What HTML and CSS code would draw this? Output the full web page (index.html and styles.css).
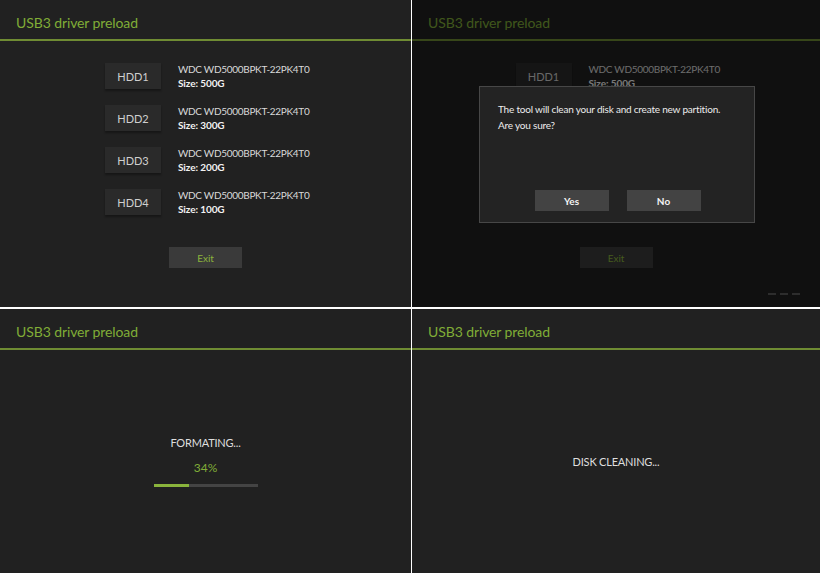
FILE: index.html
```html
<!DOCTYPE html>
<html>
<head>
<meta charset="utf-8">
<title>USB3 driver preload</title>
<link rel="stylesheet" href="styles.css">
</head>
<body>
<div class="screens">
  <section class="panel">
    <header class="header">USB3 driver preload</header>
    <div class="body body--list">
      <ul class="disks">
        <li class="disk"><span class="disk-btn">HDD1</span><div class="disk-info"><div class="disk-model">WDC WD5000BPKT-22PK4T0</div><div class="disk-size">Size: 500G</div></div></li>
        <li class="disk"><span class="disk-btn">HDD2</span><div class="disk-info"><div class="disk-model">WDC WD5000BPKT-22PK4T0</div><div class="disk-size">Size: 300G</div></div></li>
        <li class="disk"><span class="disk-btn">HDD3</span><div class="disk-info"><div class="disk-model">WDC WD5000BPKT-22PK4T0</div><div class="disk-size">Size: 200G</div></div></li>
        <li class="disk"><span class="disk-btn">HDD4</span><div class="disk-info"><div class="disk-model">WDC WD5000BPKT-22PK4T0</div><div class="disk-size">Size: 100G</div></div></li>
      </ul>
      <span class="exit-btn">Exit</span>
    </div>
  </section>

  <section class="panel">
    <header class="header">USB3 driver preload</header>
    <div class="body body--list">
      <ul class="disks">
        <li class="disk"><span class="disk-btn">HDD1</span><div class="disk-info"><div class="disk-model">WDC WD5000BPKT-22PK4T0</div><div class="disk-size">Size: 500G</div></div></li>
        <li class="disk"><span class="disk-btn">HDD2</span><div class="disk-info"><div class="disk-model">WDC WD5000BPKT-22PK4T0</div><div class="disk-size">Size: 300G</div></div></li>
        <li class="disk"><span class="disk-btn">HDD3</span><div class="disk-info"><div class="disk-model">WDC WD5000BPKT-22PK4T0</div><div class="disk-size">Size: 200G</div></div></li>
        <li class="disk"><span class="disk-btn">HDD4</span><div class="disk-info"><div class="disk-model">WDC WD5000BPKT-22PK4T0</div><div class="disk-size">Size: 100G</div></div></li>
      </ul>
      <span class="exit-btn">Exit</span>
    </div>
    <div class="pager"><span></span><span></span><span></span></div>
    <div class="overlay"></div>
    <div class="dialog">
      <p class="dialog-text">The tool will clean your disk and create new partition.<br>Are you sure?</p>
      <div class="dialog-actions">
        <span class="dialog-btn">Yes</span>
        <span class="dialog-btn">No</span>
      </div>
    </div>
  </section>

  <section class="panel">
    <header class="header">USB3 driver preload</header>
    <div class="body body--center">
      <div class="status">FORMATING...</div>
      <div class="percent">34%</div>
      <div class="progress"><div class="progress-fill" style="width:34%"></div></div>
    </div>
  </section>

  <section class="panel">
    <header class="header">USB3 driver preload</header>
    <div class="body body--center">
      <div class="status">DISK CLEANING...</div>
    </div>
  </section>
</div>
</body>
</html>
```

FILE: styles.css
```css
* { box-sizing: border-box; }

html, body {
  margin: 0;
  padding: 0;
  background: #ffffff;
  font-family: "Lato", "Open Sans", "DejaVu Sans", sans-serif;
}

.screens {
  display: grid;
  grid-template-columns: 411px 408px;
  grid-template-rows: 307px 264px;
  column-gap: 1px;
  row-gap: 2px;
  width: 821px;
  height: 573px;
}

.panel {
  position: relative;
  background: #212121;
  display: flex;
  flex-direction: column;
  overflow: hidden;
}

.header {
  height: 41px;
  flex: none;
  padding: 5px 0 0 16px;
  display: flex;
  align-items: center;
  border-bottom: 2px solid #6f8c33;
  color: #80ad37;
  font-size: 14px;
  letter-spacing: -0.1px;
}

.body {
  flex: 1;
  display: flex;
  flex-direction: column;
  align-items: center;
}

.body--list {
  padding-top: 22px;
}

.disks {
  list-style: none;
  margin: 0 0 0 1px;
  padding: 0;
  width: 202px;
  display: flex;
  flex-direction: column;
  gap: 16px;
}

.disk {
  display: flex;
  align-items: center;
  gap: 17px;
  height: 26px;
}

.disk-btn {
  flex: none;
  width: 56px;
  height: 26px;
  background: #2a2a2a;
  box-shadow: 0 2px 2px rgba(0, 0, 0, 0.35);
  color: #cfcfcf;
  font-size: 11px;
  display: flex;
  align-items: center;
  justify-content: center;
}

.disk-info {
  font-size: 10px;
  line-height: 14px;
  letter-spacing: -0.3px;
  color: #d9d9d9;
  white-space: nowrap;
}

.disk-size {
  font-weight: 700;
  color: #f2f2f2;
  letter-spacing: -0.1px;
}

.exit-btn {
  margin-top: 32px;
  width: 73px;
  height: 21px;
  background: #3a3a3a;
  color: #8ab43c;
  font-size: 10px;
  display: flex;
  align-items: center;
  justify-content: center;
}

.overlay {
  position: absolute;
  inset: 0;
  background: rgba(0, 0, 0, 0.5);
}

.pager {
  position: absolute;
  left: 356px;
  top: 293px;
  display: flex;
  gap: 4px;
}

.pager span {
  width: 8px;
  height: 2px;
  background: #5a5a5a;
}

.dialog {
  position: absolute;
  left: 67px;
  top: 86px;
  width: 276px;
  height: 137px;
  background: #232323;
  border: 1px solid #474747;
  display: flex;
  flex-direction: column;
  justify-content: space-between;
  padding: 14px 0 11px 18px;
}

.dialog-text {
  margin: 0;
  color: #ececec;
  font-size: 10px;
  letter-spacing: -0.2px;
  line-height: 16px;
}

.dialog-actions {
  display: flex;
  justify-content: center;
  gap: 18px;
  margin-left: -18px;
  padding-left: 1px;
}

.dialog-btn {
  width: 74px;
  height: 21px;
  background: #434343;
  color: #f4f4f4;
  font-size: 10px;
  font-weight: 700;
  display: flex;
  align-items: center;
  justify-content: center;
}

.body--center {
  justify-content: center;
}

.status {
  color: #dedede;
  font-size: 11px;
  letter-spacing: -0.2px;
}

.percent {
  margin-top: 11px;
  color: #80ad37;
  font-size: 12px;
}

.progress {
  margin-top: 9px;
  width: 104px;
  height: 3px;
  background: #444444;
}

.progress-fill {
  height: 100%;
  background: #8ab43c;
}
```
